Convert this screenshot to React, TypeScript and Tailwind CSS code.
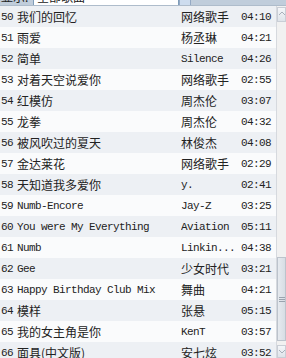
import React from 'react';

interface Song {
  no: number;
  title: string;
  artist: string;
  time: string;
}

const songs: Song[] = [
  { no: 50, title: '我们的回忆', artist: '网络歌手', time: '04:10' },
  { no: 51, title: '雨爱', artist: '杨丞琳', time: '04:21' },
  { no: 52, title: '简单', artist: 'Silence', time: '04:26' },
  { no: 53, title: '对着天空说爱你', artist: '网络歌手', time: '02:55' },
  { no: 54, title: '红模仿', artist: '周杰伦', time: '03:07' },
  { no: 55, title: '龙拳', artist: '周杰伦', time: '04:32' },
  { no: 56, title: '被风吹过的夏天', artist: '林俊杰', time: '04:08' },
  { no: 57, title: '金达莱花', artist: '网络歌手', time: '02:29' },
  { no: 58, title: '天知道我多爱你', artist: 'y.', time: '02:41' },
  { no: 59, title: 'Numb-Encore', artist: 'Jay-Z', time: '03:25' },
  { no: 60, title: 'You were My Everything', artist: 'Aviation', time: '05:11' },
  { no: 61, title: 'Numb', artist: 'Linkin...', time: '04:38' },
  { no: 62, title: 'Gee', artist: '少女时代', time: '03:21' },
  { no: 63, title: 'Happy Birthday Club Mix', artist: '舞曲', time: '04:21' },
  { no: 64, title: '模样', artist: '张悬', time: '05:15' },
  { no: 65, title: '我的女主角是你', artist: 'KenT', time: '03:57' },
  { no: 66, title: '面具(中文版)', artist: '安七炫', time: '03:52' },
];

const mono = "font-['Liberation_Mono',monospace] text-[11px] tracking-[-0.6px]";
const cjk = "font-['Noto_Sans_CJK_SC','Liberation_Sans',sans-serif] text-[12px] tracking-normal";

// ascii-only strings use the narrow mono face, anything else the CJK face
const styleFor = (text: string) => (/^[\x00-\x7f]*$/.test(text) ? mono : cjk);

function SongRow({ song, index }: { song: Song; index: number }) {
  return (
    <div
      className={`flex items-center h-[21px] leading-[18px] text-[#222] whitespace-nowrap ${
        index % 2 === 0 ? 'bg-[#edf0f4]' : 'bg-[#fafbfc]'
      }`}
    >
      <span className={`w-[13px] shrink-0 flex justify-end ${mono}`}>{song.no}</span>
      <span className={`w-[168px] shrink-0 pl-[4px] overflow-hidden ${styleFor(song.title)}`}>
        {song.title}
      </span>
      <span className={`w-[58px] shrink-0 overflow-hidden ${styleFor(song.artist)}`}>{song.artist}</span>
      <span className={`flex-1 text-right pr-[5px] ${mono}`}>{song.time}</span>
    </div>
  );
}

function ScrollBar() {
  return (
    <div className="w-[10px] shrink-0 flex flex-col bg-[#f1f1f1] border-l border-[#d6d9de]">
      <div className="h-[15px] mt-[1px] bg-gradient-to-b from-[#f4f6f9] to-[#dfe4ea] border border-[#c9ced6] flex items-start justify-center pt-[3px]">
        <svg width="6" height="4" viewBox="0 0 6 4">
          <path d="M0 4 L3 1 L6 4" fill="none" stroke="#a8b0ba" strokeWidth="1" />
        </svg>
      </div>
      <div className="h-[235px] shrink-0" />
      <div className="h-[84px] shrink-0 bg-gradient-to-r from-[#e6eaef] to-[#d7dde4] border border-[#bcc3cc] flex flex-col items-center justify-center gap-[1px]">
        <div className="w-[6px] h-px bg-[#9aa3ae]" />
        <div className="w-[6px] h-px bg-[#9aa3ae]" />
        <div className="w-[6px] h-px bg-[#9aa3ae]" />
      </div>
      <div className="flex-1" />
      <div className="h-[13px] bg-gradient-to-b from-[#f4f6f9] to-[#dfe4ea] border border-[#c9ced6] flex items-center justify-center">
        <svg width="6" height="4" viewBox="0 0 6 4">
          <path d="M0 0 L3 3 L6 0" fill="none" stroke="#a8b0ba" strokeWidth="1" />
        </svg>
      </div>
    </div>
  );
}

export default function App() {
  return (
    <div className="w-[286px] h-[358px] overflow-hidden bg-white flex flex-col">
      <div className="h-[6px] shrink-0 overflow-hidden bg-[#c0cddb] border-b border-[#aebccb]">
        <div className={`flex items-center h-[18px] -mt-[12px] text-[#222] ${cjk}`}>
          <span className="w-[33px] pl-[1px]">显示:</span>
          <div className="w-[146px] h-[18px] bg-white border border-[#7f9db9] pl-[3px] flex items-center">
            全部歌曲
          </div>
          <div className="w-[12px] h-[18px] bg-[#cddcee] border border-[#94a9c4]" />
        </div>
      </div>
      <div className="flex flex-1 min-h-0">
        <div className="flex-1 overflow-hidden">
          {songs.map((s, i) => (
            <SongRow key={s.no} song={s} index={i} />
          ))}
        </div>
        <ScrollBar />
      </div>
    </div>
  );
}
